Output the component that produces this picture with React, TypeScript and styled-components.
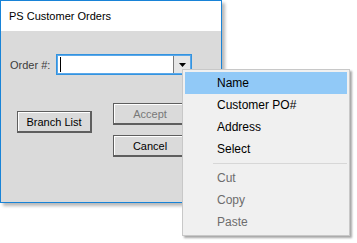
import React from "react";
import styled, { createGlobalStyle } from "styled-components";

const Global = createGlobalStyle`
  html, body { margin: 0; padding: 0; background: #ffffff; }
  body { font-family: "Liberation Sans", Arial, sans-serif; width: 357px; height: 243px; overflow: hidden; }
  #root { position: relative; width: 357px; height: 243px; }
`;

const Window = styled.div`
  position: relative;
  box-sizing: border-box;
  width: 222px;
  height: 203px;
  border: 1px solid #1883d7;
  background: #dadada;
  box-shadow: 3px 3px 3px rgba(0, 0, 0, 0.28);
  display: flex;
  flex-direction: column;
`;

const TitleBar = styled.div`
  height: 30px;
  background: #ffffff;
  display: flex;
  align-items: center;
  padding-left: 8px;
  font-size: 11px;
  color: #000000;
`;

const Content = styled.div`
  padding: 23px 0 0 9px;
  display: flex;
  flex-direction: column;
`;

const FieldRow = styled.div`
  display: flex;
  align-items: center;
  height: 21px;
  gap: 6px;
`;

const Label = styled.span`
  font-size: 11px;
  color: #3c3c3c;
`;

const Combo = styled.div`
  box-sizing: border-box;
  width: 136px;
  height: 21px;
  border: 1px solid #3393df;
  box-shadow: inset 0 0 0 1px #5aa8ea;
  display: flex;
  background: #ffffff;
`;

const ComboInput = styled.div`
  flex: 1;
  display: flex;
  align-items: center;
  padding-left: 3px;
`;

const Caret = styled.div`
  width: 1px;
  height: 15px;
  background: #000000;
`;

const ComboButton = styled.div`
  width: 16px;
  border-left: 1px solid #7a7a7a;
  background: #e6e6e6;
  display: flex;
  align-items: center;
  justify-content: center;
  margin: 1px 1px 1px 0;
`;

const ButtonArea = styled.div`
  display: flex;
  margin-top: 28px;
  gap: 21px;
  padding-left: 7px;
`;

const SideButtons = styled.div`
  display: flex;
  flex-direction: column;
  gap: 10px;
`;

const Button = styled.div<{ $disabled?: boolean; $offset?: number }>`
  box-sizing: border-box;
  width: 75px;
  height: 22px;
  margin-top: ${(p) => p.$offset ?? 0}px;
  border: 1px solid #5e5e5e;
  border-bottom-width: 2px;
  border-right-width: 2px;
  box-shadow: inset 1px 1px 0 #ffffff;
  background: #dadada;
  display: flex;
  align-items: center;
  justify-content: center;
  font-size: 11px;
  color: ${(p) => (p.$disabled ? "#787878" : "#000000")};
`;

const Menu = styled.div`
  position: absolute;
  left: 182px;
  top: 69px;
  box-sizing: border-box;
  width: 168px;
  border: 1px solid #c8c8c8;
  background: #f0f0f0;
  padding: 2px;
  box-shadow: 2px 2px 2px rgba(0, 0, 0, 0.35);
  display: flex;
  flex-direction: column;
`;

const MenuItem = styled.div<{ $active?: boolean; $disabled?: boolean }>`
  height: 22px;
  display: flex;
  align-items: center;
  padding-left: 32px;
  font-size: 12px;
  background: ${(p) => (p.$active ? "#91c9f7" : "transparent")};
  color: ${(p) => (p.$disabled ? "#6d6d6d" : "#000000")};
`;

const Separator = styled.div`
  height: 1px;
  background: #d7d7d7;
  margin: 3px 0 3px 28px;
`;

export default function App() {
  return (
    <>
      <Global />
      <Window>
        <TitleBar>PS Customer Orders</TitleBar>
        <Content>
          <FieldRow>
            <Label>Order #:</Label>
            <Combo>
              <ComboInput>
                <Caret />
              </ComboInput>
              <ComboButton>
                <svg width="7" height="4" viewBox="0 0 7 4">
                  <path d="M0 0 H7 L3.5 4 Z" fill="#000" />
                </svg>
              </ComboButton>
            </Combo>
          </FieldRow>
          <ButtonArea>
            <Button $offset={8}>Branch List</Button>
            <SideButtons>
              <Button $disabled>Accept</Button>
              <Button>Cancel</Button>
            </SideButtons>
          </ButtonArea>
        </Content>
      </Window>
      <Menu>
        <MenuItem $active>Name</MenuItem>
        <MenuItem>Customer PO#</MenuItem>
        <MenuItem>Address</MenuItem>
        <MenuItem>Select</MenuItem>
        <Separator />
        <MenuItem $disabled>Cut</MenuItem>
        <MenuItem $disabled>Copy</MenuItem>
        <MenuItem $disabled>Paste</MenuItem>
      </Menu>
    </>
  );
}
